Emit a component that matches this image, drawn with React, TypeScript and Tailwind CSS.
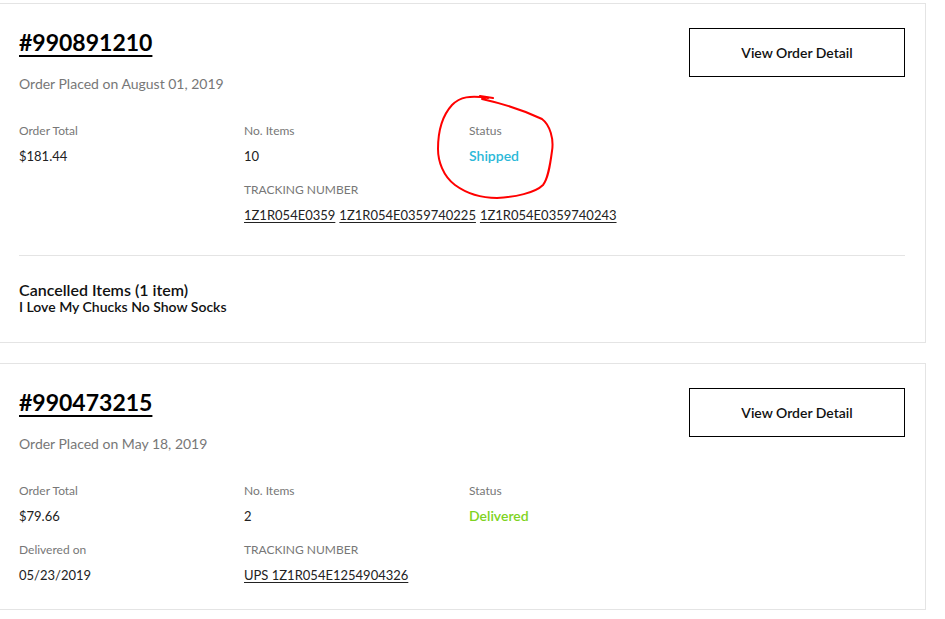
import React from 'react';

type Order = {
  id: string;
  placed: string;
  total: string;
  items: string;
  status: string;
  statusColor: string;
  tracking: string[];
  delivered?: string;
  cancelled?: { count: string; name: string };
};

const orders: Order[] = [
  {
    id: '#990891210',
    placed: 'August 01, 2019',
    total: '$181.44',
    items: '10',
    status: 'Shipped',
    statusColor: 'text-[#2bb8d8]',
    tracking: ['1Z1R054E0359', '1Z1R054E0359740225', '1Z1R054E0359740243'],
    cancelled: { count: 'Cancelled Items (1 item)', name: 'I Love My Chucks No Show Socks' },
  },
  {
    id: '#990473215',
    placed: 'May 18, 2019',
    total: '$79.66',
    items: '2',
    status: 'Delivered',
    statusColor: 'text-[#7ed321]',
    tracking: ['UPS 1Z1R054E1254904326'],
    delivered: '05/23/2019',
  },
];

function Field({ label, children }: { label: string; children: React.ReactNode }) {
  return (
    <div className="flex flex-col gap-[8px]">
      <span className="text-[12px] leading-[16px] text-[#777]">{label}</span>
      <div className="text-[13px] leading-[18px] text-[#222]">{children}</div>
    </div>
  );
}

function OrderCard({ order, circled }: { order: Order; circled?: boolean }) {
  return (
    <div className="relative w-[926px] border-t border-r border-b border-[#e4e4e4] bg-white">
      <div className="pl-[19px] pr-[20px] pt-[24px] pb-[25px]">
        <div className="flex items-start justify-between">
          <div className="flex flex-col">
            <a href="#" className="text-[23px] leading-[28px] font-bold text-black underline decoration-2 underline-offset-[4px]">
              {order.id}
            </a>
            <p className="mt-[18px] text-[14px] leading-[20px] text-[#777]">Order Placed on {order.placed}</p>
          </div>
          <button className="w-[216px] h-[49px] border-[1.5px] border-black text-[14px] font-semibold text-[#111]">
            View Order Detail
          </button>
        </div>

        <div className="mt-[29px] grid grid-cols-[225px_225px_225px] gap-y-[17px]">
          <Field label="Order Total">{order.total}</Field>
          <Field label="No. Items">{order.items}</Field>
          <Field label="Status">
            <span className={`text-[14px] font-semibold ${order.statusColor}`}>{order.status}</span>
          </Field>
          {order.delivered ? <Field label="Delivered on">{order.delivered}</Field> : <div />}
          <div className="col-span-2">
            <Field label="TRACKING NUMBER">
              <div className="flex gap-[4px] whitespace-nowrap">
                {order.tracking.map((t) => (
                  <a key={t} href="#" className="underline underline-offset-2">
                    {t}
                  </a>
                ))}
              </div>
            </Field>
          </div>
        </div>

        {order.cancelled && (
          <div className="mt-[31px] border-t border-[#e4e4e4] pt-[26px] pb-[2px]">
            <p className="text-[16px] leading-[16px] font-semibold text-[#111]">{order.cancelled.count}</p>
            <p className="text-[14px] leading-[17px] font-semibold text-[#111]">{order.cancelled.name}</p>
          </div>
        )}
      </div>

      {circled && (
        <svg className="absolute left-0 top-0 pointer-events-none" width="600" height="220" viewBox="0 0 600 220" fill="none">
          <path
            d="M480 95 L493 97 M482 98 C500 102 525 110 542 118 C550 124 554 138 552 150 C550 165 548 178 543 184 C535 192 515 196 497 197 C480 197 466 192 455 184 C443 175 438 160 438 148 C438 130 442 115 452 104 C460 96 470 94 488 97"
            stroke="#ff0000"
            strokeWidth="2"
            strokeLinecap="round"
            strokeLinejoin="round"
            transform="translate(0 -3)"
          />
        </svg>
      )}
    </div>
  );
}

export default function App() {
  return (
    <div className="min-h-screen bg-white pt-[3px]" style={{ fontFamily: 'Lato, "Open Sans", sans-serif' }}>
      <div className="flex flex-col gap-[20px]">
        {orders.map((o, i) => (
          <OrderCard key={o.id} order={o} circled={i === 0} />
        ))}
      </div>
    </div>
  );
}
